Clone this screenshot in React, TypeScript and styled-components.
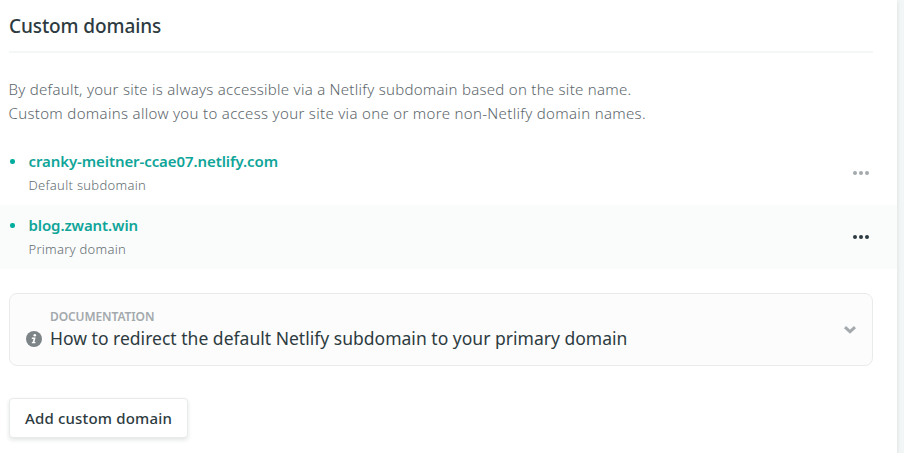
import React from "react";
import styled, { createGlobalStyle } from "styled-components";

const GlobalStyle = createGlobalStyle`
  *, *::before, *::after { box-sizing: border-box; }
  html, body { margin: 0; padding: 0; }
  body {
    background: #f3f6f6;
    font-family: "Noto Sans", "Open Sans", sans-serif;
    overflow: hidden;
  }
`;

const Card = styled.section`
  width: 897px;
  height: 453px;
  background: #fff;
  box-shadow: 0 2px 4px rgba(14, 30, 37, 0.12);
  overflow: visible;
`;

const Header = styled.header`
  height: 53px;
  margin: 0 24px 0 9px;
  padding-top: 12px;
  border-bottom: 2px solid #f5f6f6;
`;

const Title = styled.h3`
  margin: 0;
  font-size: 19px;
  line-height: 28px;
  font-weight: 500;
  letter-spacing: -0.1px;
  color: #2d3b41;
`;

const Intro = styled.p`
  margin: 0;
  padding: 24px 0 0 8.5px;
  height: 88px;
  font-size: 15px;
  line-height: 24px;
  font-weight: 300;
  color: #5c666b;
  white-space: nowrap;
`;

const Line = styled.span<{ $spacing: number }>`
  display: block;
  letter-spacing: ${(p) => p.$spacing}px;
`;

const DomainList = styled.ul`
  list-style: none;
  margin: 0;
  padding: 0;
`;

const DomainRow = styled.li<{ $active?: boolean }>`
  display: flex;
  align-items: center;
  justify-content: space-between;
  height: 64px;
  padding: 0 28px 0 10px;
  background: ${(p) => (p.$active ? "#fafbfb" : "#fff")};
  color: ${(p) => (p.$active ? "#2d3b41" : "#a3a9ac")};
`;

const DomainInfo = styled.div`
  display: grid;
  grid-template-columns: 18.5px auto;
  grid-template-rows: 24px 24px;
  align-items: center;
  height: 48px;
`;

const Bullet = styled.span`
  width: 4.5px;
  height: 4.5px;
  margin-top: 1px;
  border-radius: 50%;
  background: #00ad9f;
`;

const DomainLink = styled.a<{ $spacing: number }>`
  font-size: 15px;
  line-height: 24px;
  font-weight: 600;
  letter-spacing: ${(p) => p.$spacing}px;
  color: #0fa599;
`;

const DomainNote = styled.span<{ $spacing: number }>`
  grid-column: 2;
  font-size: 13px;
  line-height: 24px;
  font-weight: 300;
  letter-spacing: ${(p) => p.$spacing}px;
  color: #636d72;
`;

const MenuButton = styled.button`
  display: flex;
  padding: 0;
  border: 0;
  background: none;
  color: inherit;
`;

const DocPanel = styled.div`
  display: flex;
  align-items: center;
  height: 73px;
  margin: 24px 24px 0 9px;
  padding: 0 16px;
  border: 1px solid #e9ebeb;
  border-radius: 8px;
  background: #fcfcfc;
`;

const DocText = styled.div`
  display: grid;
  grid-template-columns: 24px auto;
  grid-template-rows: 16px 28px;
  align-items: center;
  flex: 1;
  margin-top: 2px;
`;

const DocLabel = styled.span`
  grid-column: 2;
  font-size: 12px;
  line-height: 16px;
  font-weight: 600;
  letter-spacing: -0.1px;
  color: #a3a9ac;
`;

const DocTitle = styled.span`
  font-size: 17.5px;
  line-height: 28px;
  margin-top: -2px;
  font-weight: 400;
  letter-spacing: 0.015px;
  color: #2d3b41;
  white-space: nowrap;
`;

const AddButton = styled.button`
  display: flex;
  align-items: center;
  justify-content: center;
  width: 179px;
  height: 40px;
  margin: 32px 0 0 9px;
  padding: 0;
  border: 1px solid #e9ebeb;
  border-radius: 4px;
  background: #fff;
  box-shadow: 0 2px 4px rgba(14, 30, 37, 0.12);
  font-family: inherit;
  font-size: 15px;
  font-weight: 500;
  letter-spacing: 0.18px;
  line-height: 24px;
  color: #2d3b41;
`;

const MoreIcon = () => (
  <svg width="16" height="4" viewBox="0 0 16 4" fill="currentColor">
    <circle cx="2" cy="2" r="2" />
    <circle cx="8" cy="2" r="2" />
    <circle cx="14" cy="2" r="2" />
  </svg>
);

const InfoIcon = () => (
  <svg width="16" height="16" viewBox="0 0 16 16">
    <circle cx="8" cy="8" r="8" fill="#7c8488" />
    <circle cx="8.8" cy="4.3" r="1.3" fill="#fcfcfc" />
    <path d="M6 6.6h3.6l-1.1 4.3h1.1l-.3 1.3H5.7l.3-1.3h.7l.8-3H5.7z" fill="#fcfcfc" />
  </svg>
);

const ChevronIcon = () => (
  <svg width="12" height="8" viewBox="0 0 12 8" fill="none" stroke="#a3a9ac" strokeWidth="2.9">
    <path d="M1 1.2 6 5.7l5-4.5" />
  </svg>
);

const domains = [
  { name: "cranky-meitner-ccae07.netlify.com", note: "Default subdomain", active: false, spacing: -0.09, noteSpacing: 0.3 },
  { name: "blog.zwant.win", note: "Primary domain", active: true, spacing: -0.1, noteSpacing: 0.26 },
];

export default function App() {
  return (
    <>
      <GlobalStyle />
      <Card>
        <Header>
          <Title>Custom domains</Title>
        </Header>
        <Intro>
          <Line $spacing={0.27}>By default, your site is always accessible via a Netlify subdomain based on the site name.</Line>
          <Line $spacing={0.32}>Custom domains allow you to access your site via one or more non-Netlify domain names.</Line>
        </Intro>
        <DomainList>
          {domains.map((d) => (
            <DomainRow key={d.name} $active={d.active}>
              <DomainInfo>
                <Bullet />
                <DomainLink $spacing={d.spacing}>{d.name}</DomainLink>
                <DomainNote $spacing={d.noteSpacing}>{d.note}</DomainNote>
              </DomainInfo>
              <MenuButton aria-label="Domain options">
                <MoreIcon />
              </MenuButton>
            </DomainRow>
          ))}
        </DomainList>
        <DocPanel>
          <DocText>
            <DocLabel>DOCUMENTATION</DocLabel>
            <InfoIcon />
            <DocTitle>How to redirect the default Netlify subdomain to your primary domain</DocTitle>
          </DocText>
          <ChevronIcon />
        </DocPanel>
        <AddButton>Add custom domain</AddButton>
      </Card>
    </>
  );
}
